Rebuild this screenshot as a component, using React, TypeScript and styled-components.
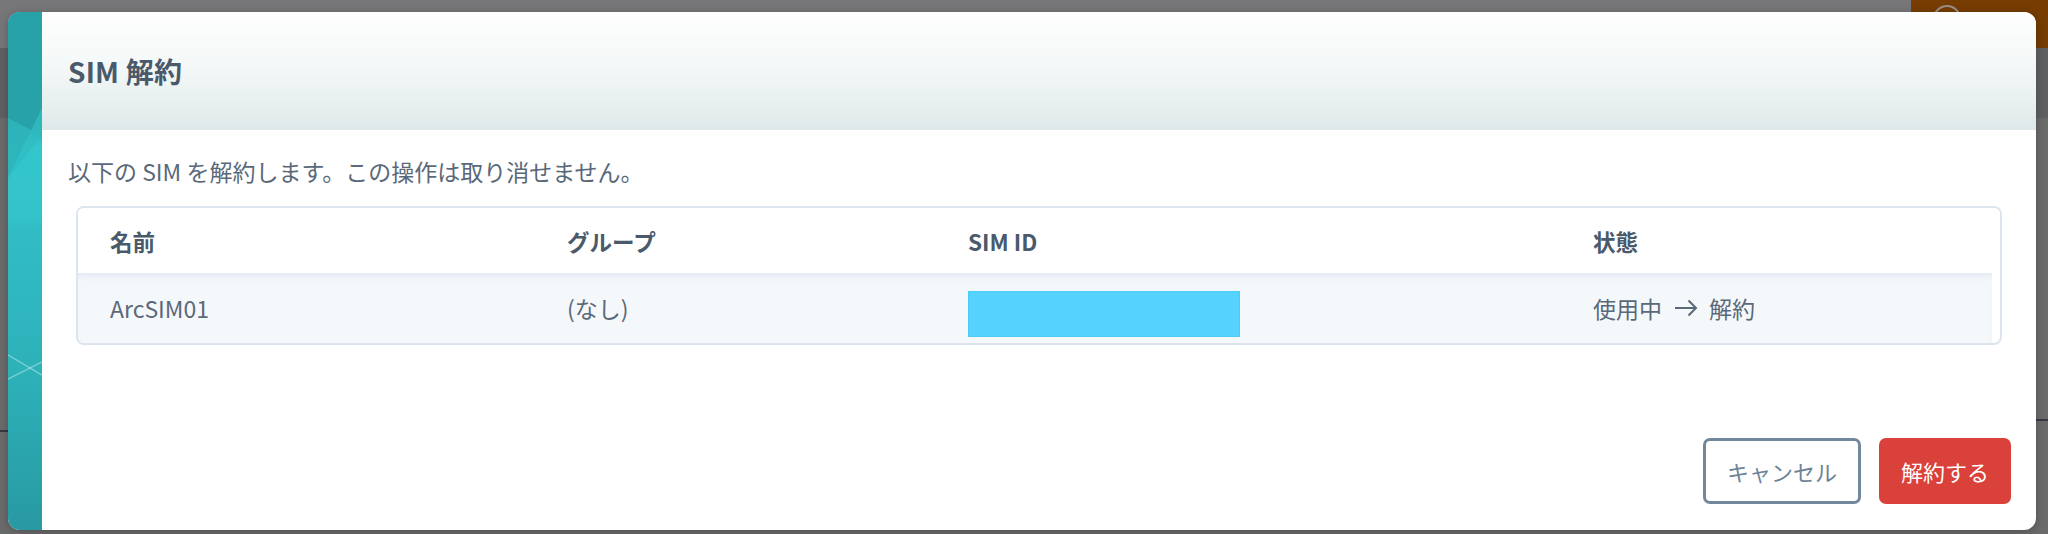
import React from "react";
import styled, { createGlobalStyle } from "styled-components";

const Global = createGlobalStyle`
  html, body { margin: 0; padding: 0; }
  body {
    width: 2048px;
    height: 534px;
    overflow: hidden;
    background: #6b6b6c;
    font-family: "Noto Sans CJK JP", "Noto Sans", sans-serif;
  }
  #root { position: relative; width: 2048px; height: 534px; }
`;

/* ---------- page behind the dialog (dimmed) ---------- */
const Backdrop = styled.div`
  display: flex;
  flex-direction: column;
  width: 2048px;
  height: 534px;
`;

const TopBar = styled.div`
  display: flex;
  height: 48px;
  flex: none;
  background: #77777a;
`;

const TopFill = styled.div`
  flex: 1;
`;

const BrandBlock = styled.div`
  width: 137px;
  background: #763c02;
  display: flex;
  align-items: flex-start;
  padding: 5px 0 0 22px;
  box-sizing: border-box;
`;

const RingIcon = styled.div`
  width: 24px;
  height: 24px;
  border: 2px solid #9a8f86;
  border-radius: 50%;
`;

const SubBar = styled.div`
  height: 70px;
  flex: none;
  background: #5f6064;
`;

const MainArea = styled.div`
  flex: 1;
  display: grid;
  grid-template-columns: 300px 1fr;
  align-items: start;
`;

const PaneLine = styled.div<{ $top: number }>`
  margin-top: ${(p) => p.$top}px;
  height: 2px;
  background: #363a40;
`;

/* ---------- dialog ---------- */
const Modal = styled.div`
  position: absolute;
  left: 8px;
  top: 12px;
  width: 2028px;
  height: 518px;
  border-radius: 12px;
  overflow: hidden;
  display: flex;
  background: #ffffff;
  box-shadow: 0 2px 10px rgba(0, 0, 0, 0.25);
`;

const Stripe = styled.div`
  width: 34px;
  flex: none;
  display: flex;
  svg { display: block; }
`;

const Content = styled.div`
  flex: 1;
  display: flex;
  flex-direction: column;
  min-width: 0;
`;

const Header = styled.div`
  height: 118px;
  flex: none;
  display: flex;
  align-items: center;
  padding-left: 26px;
  background: linear-gradient(180deg, #fefefe 0%, #f6f9f9 40%, #e9f0f0 75%, #dfe8e9 100%);
`;

const Title = styled.h2`
  margin: 0;
  font-size: 28px;
  font-weight: 700;
  color: #4a5a6b;
  letter-spacing: 0.2px;
`;

const Body = styled.div`
  flex: 1;
  padding: 25px 34px 0 26px;
`;

const Lead = styled.p`
  margin: 0 0 19px 0;
  font-size: 23px;
  line-height: 32px;
  color: #5a6979;
`;

const Table = styled.div`
  margin-left: 8px;
  border: 2px solid #dce5ee;
  border-radius: 8px;
  overflow: hidden;
`;

const Row = styled.div<{ $body?: boolean }>`
  display: grid;
  grid-template-columns: 457px 401px 625px 1fr;
  align-items: center;
  height: ${(p) => (p.$body ? 70 : 65)}px;
  background: ${(p) => (p.$body ? "#f4f8fb" : "#ffffff")};
  box-shadow: ${(p) => (p.$body ? "inset 0 7px 7px -5px rgba(200, 214, 232, 0.55)" : "none")};
  margin-right: ${(p) => (p.$body ? 8 : 0)}px;
`;

const HeadCell = styled.div`
  padding-left: 32px;
  font-size: 22.5px;
  font-weight: 700;
  color: #4a5a6b;
`;

const Cell = styled.div`
  padding-left: 32px;
  font-size: 23px;
  color: #5a6979;
  display: flex;
  align-items: center;
`;

const IdCell = styled.div`
  padding-left: 32px;
  align-self: end;
  margin-bottom: 6px;
  display: flex;
`;

const Redacted = styled.div`
  width: 272px;
  height: 46px;
  box-sizing: border-box;
  background: #55d3fc;
  border: 1px solid #4dcdf6;
`;

const Arrow = styled.svg`
  margin: 0 11px 0 12px;
  flex: none;
`;

const Footer = styled.div`
  display: flex;
  justify-content: flex-end;
  gap: 18px;
  padding: 0 25px 26px 0;
`;

const Button = styled.button<{ $danger?: boolean }>`
  font: inherit;
  font-size: 22px;
  height: 66px;
  box-sizing: border-box;
  border-radius: 7px;
  cursor: pointer;
  padding: ${(p) => (p.$danger ? "0 22px" : "0 21px")};
  border: ${(p) => (p.$danger ? "none" : "3px solid #71879b")};
  background: ${(p) => (p.$danger ? "#d9413a" : "#ffffff")};
  color: ${(p) => (p.$danger ? "#ffffff" : "#6d8397")};
`;

const StripeArt = () => (
  <svg width="34" height="518" viewBox="0 0 34 518">
    <defs>
      <linearGradient id="stripeGrad" x1="0" y1="0" x2="0" y2="1">
        <stop offset="0" stopColor="#27a1a8" />
        <stop offset="0.2" stopColor="#29a7ae" />
        <stop offset="0.26" stopColor="#34c6cd" />
        <stop offset="0.4" stopColor="#33c3ca" />
        <stop offset="0.42" stopColor="#31bcc4" />
        <stop offset="0.7" stopColor="#2db1b9" />
        <stop offset="1" stopColor="#2899a2" />
      </linearGradient>
    </defs>
    <rect x="0" y="0" width="34" height="518" fill="url(#stripeGrad)" />
    <polygon points="0,0 34,0 34,124 0,106" fill="#28a2a9" />
    <polygon points="0,106 34,124 34,96 0,166" fill="#2db3ba" opacity="0.9" />
    <polygon points="0,166 34,96 34,124" fill="#30bbc2" opacity="0.6" />
    <line x1="0" y1="343" x2="34" y2="363" stroke="rgba(255,255,255,0.35)" strokeWidth="1.5" />
    <line x1="0" y1="367" x2="34" y2="350" stroke="rgba(255,255,255,0.35)" strokeWidth="1.5" />
  </svg>
);

export default function App() {
  return (
    <>
      <Global />
      <Backdrop>
        <TopBar>
          <TopFill />
          <BrandBlock>
            <RingIcon />
          </BrandBlock>
        </TopBar>
        <SubBar />
        <MainArea>
          <PaneLine $top={312} />
          <PaneLine $top={301} />
        </MainArea>
      </Backdrop>

      <Modal role="dialog" aria-label="SIM 解約">
        <Stripe>
          <StripeArt />
        </Stripe>
        <Content>
          <Header>
            <Title>SIM 解約</Title>
          </Header>
          <Body>
            <Lead>以下の SIM を解約します。この操作は取り消せません。</Lead>
            <Table>
              <Row>
                <HeadCell>名前</HeadCell>
                <HeadCell>グループ</HeadCell>
                <HeadCell>SIM ID</HeadCell>
                <HeadCell>状態</HeadCell>
              </Row>
              <Row $body>
                <Cell>ArcSIM01</Cell>
                <Cell>(なし)</Cell>
                <IdCell>
                  <Redacted />
                </IdCell>
                <Cell>
                  使用中
                  <Arrow width="24" height="18" viewBox="0 0 24 18">
                    <path d="M1 9 H22 M14.5 1.5 L22 9 L14.5 16.5" fill="none" stroke="#5a6979" strokeWidth="2" />
                  </Arrow>
                  解約
                </Cell>
              </Row>
            </Table>
          </Body>
          <Footer>
            <Button>キャンセル</Button>
            <Button $danger>解約する</Button>
          </Footer>
        </Content>
      </Modal>
    </>
  );
}
